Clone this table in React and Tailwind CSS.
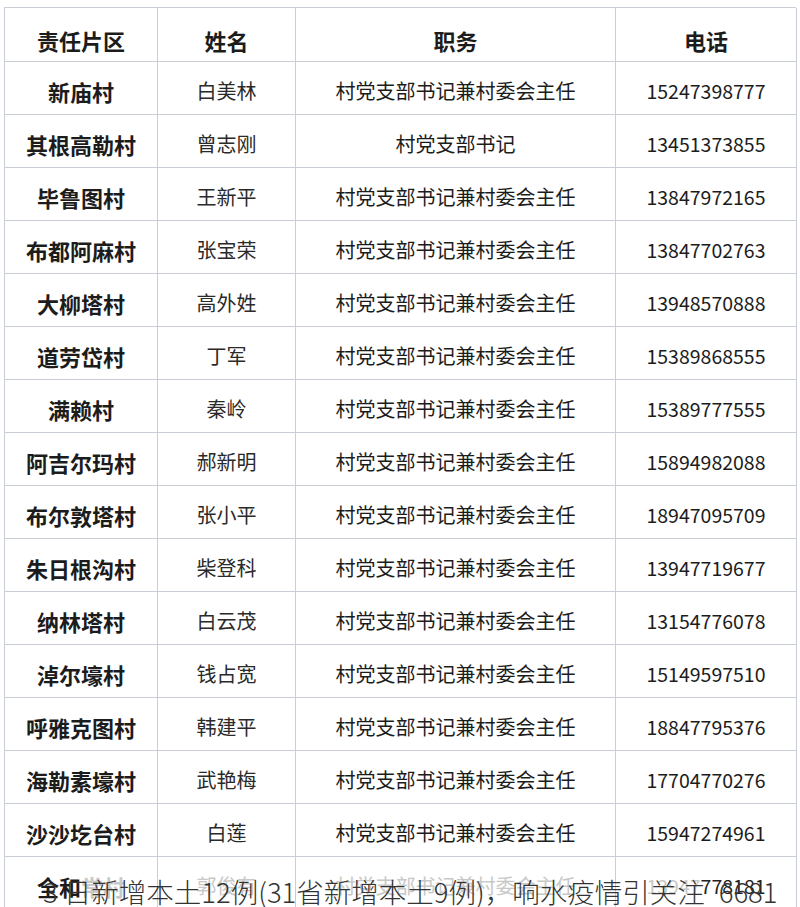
const rows = [
  ["新庙村", "白美林", "村党支部书记兼村委会主任", "15247398777"],
  ["其根高勒村", "曾志刚", "村党支部书记", "13451373855"],
  ["毕鲁图村", "王新平", "村党支部书记兼村委会主任", "13847972165"],
  ["布都阿麻村", "张宝荣", "村党支部书记兼村委会主任", "13847702763"],
  ["大柳塔村", "高外姓", "村党支部书记兼村委会主任", "13948570888"],
  ["道劳岱村", "丁军", "村党支部书记兼村委会主任", "15389868555"],
  ["满赖村", "秦岭", "村党支部书记兼村委会主任", "15389777555"],
  ["阿吉尔玛村", "郝新明", "村党支部书记兼村委会主任", "15894982088"],
  ["布尔敦塔村", "张小平", "村党支部书记兼村委会主任", "18947095709"],
  ["朱日根沟村", "柴登科", "村党支部书记兼村委会主任", "13947719677"],
  ["纳林塔村", "白云茂", "村党支部书记兼村委会主任", "13154776078"],
  ["淖尔壕村", "钱占宽", "村党支部书记兼村委会主任", "15149597510"],
  ["呼雅克图村", "韩建平", "村党支部书记兼村委会主任", "18847795376"],
  ["海勒素壕村", "武艳梅", "村党支部书记兼村委会主任", "17704770276"],
  ["沙沙圪台村", "白莲", "村党支部书记兼村委会主任", "15947274961"],
];

const font = { fontFamily: '"Noto Sans CJK SC", "Noto Sans", sans-serif' };
const cell = "flex items-center justify-center border-r border-b border-[#c9ced6] pt-[6px]";

export default function App() {
  return (
    <div className="relative w-[800px] h-[907px] overflow-hidden bg-white text-[#1c1c1c]" style={font}>
      <div className="pt-[7px] pl-[4px]">
        <div className="grid grid-cols-[153px_138px_320px_181px] w-[792px] border-l border-t border-[#c9ced6]">
          {["责任片区", "姓名", "职务", "电话"].map((h) => (
            <div key={h} className="flex items-center justify-center h-[54px] pt-[12px] border-r border-b border-[#c9ced6] text-[22px] font-bold">
              {h}
            </div>
          ))}
          {rows.map((r) => (
            <div key={r[0]} className="contents">
              <div className={`${cell} h-[53px] text-[22px] font-bold`}>{r[0]}</div>
              <div className={`${cell} h-[53px] text-[20px] text-[#2a2a2a]`}>{r[1]}</div>
              <div className={`${cell} h-[53px] text-[20px]`}>{r[2]}</div>
              <div className={`${cell} h-[53px] text-[19.5px]`}>{r[3]}</div>
            </div>
          ))}
          <div className={`${cell} h-[53px] text-[22px] font-bold`}>
            <span>全和</span>
            <span className="text-[#c8c8c8]">常村</span>
          </div>
          <div className={`${cell} h-[53px] text-[20px] text-[#c8c8c8]`}>郭俊有</div>
          <div className={`${cell} h-[53px] text-[20px] text-[#c8c8c8]`}>村党支部书记兼村委会主任</div>
          <div className={`${cell} h-[53px] text-[19.5px]`}>
            <span className="text-[#c8c8c8]">13947</span>
            <span className="text-[#222]">778181</span>
          </div>
        </div>
      </div>
      <div className="absolute left-[43px] top-[878px] whitespace-nowrap text-[27.5px] leading-none text-[#333] font-light">
        3 日新增本土12例(31省新增本土9例)，响水疫情引关注<span className="ml-[14px]">6681</span>
      </div>
    </div>
  );
}
